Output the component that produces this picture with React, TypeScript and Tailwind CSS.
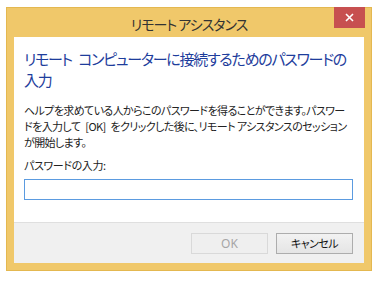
export default function App() {
  const jp = "font-['Noto_Sans_CJK_JP','Noto_Sans',sans-serif] [font-feature-settings:'palt']";
  return (
    <div className={`w-[383px] h-[283px] bg-white pt-[7px] pl-[6px] ${jp}`}>
      <div className="w-[366px] h-[264px] bg-[#f0c86a] flex flex-col shadow-[0_0_0_1px_#e4b850_inset]">
        <div className="h-[30px] relative flex items-center justify-center pt-[3px]">
          <span className="text-[14px] tracking-[-1px] text-[#333] leading-none whitespace-nowrap">リモート アシスタンス</span>
          <div className="absolute right-[7px] top-0 w-[31px] h-[21px] bg-[#c75050] flex items-center justify-center">
            <svg width="9" height="9" viewBox="0 0 9 9">
              <path d="M1 1L8 8M8 1L1 8" stroke="white" strokeWidth="1.6" />
            </svg>
          </div>
        </div>
        <div className="mx-[8px] flex-1 mb-[8px] flex flex-col">
          <div className="h-[185px] bg-white pl-[10px] pr-[10px] pt-[11px] flex flex-col">
            <div className="text-[15px] tracking-[-1.25px] leading-[21px] text-[#1e3d9c] whitespace-nowrap">
              リモート{"\u2002"}コンピューターに接続するためのパスワードの
              <br />
              入力
            </div>
            <div className="mt-[12px] text-[11px] tracking-[-0.6px] leading-[16px] text-[#222] whitespace-nowrap">
              ヘルプを求めている人からこのパスワードを得ることができます。パスワー
              <br />
              ドを入力して{"\u2002"}[OK]{"\u2002"}をクリックした後に、リモート アシスタンスのセッション
              <br />
              が開始します。
            </div>
            <div className="mt-[7px] text-[11px] tracking-[-0.4px] leading-[16px] text-[#222] whitespace-nowrap">パスワードの入力:</div>
            <div className="mt-[6px] w-[329px] h-[21px] border border-[#5b9be0] bg-white" />
          </div>
          <div className="flex-1 bg-[#f0f0f0] border-t border-[#dfdfdf] flex justify-end items-start pt-[10px] pr-[11px] gap-[8px]">
            <div className="w-[77px] h-[21px] border border-[#d9d9d9] bg-[#efefef] flex items-center justify-center text-[12px] text-[#a6a6a6] font-['Noto_Sans','Noto_Sans_CJK_JP',sans-serif]">
              OK
            </div>
            <div className="w-[77px] h-[21px] border border-[#adadad] bg-gradient-to-b from-[#f2f2f2] to-[#e5e5e5] flex items-center justify-center text-[11px] tracking-[-0.5px] text-[#111] whitespace-nowrap">
              キャンセル
            </div>
          </div>
        </div>
      </div>
    </div>
  );
}
